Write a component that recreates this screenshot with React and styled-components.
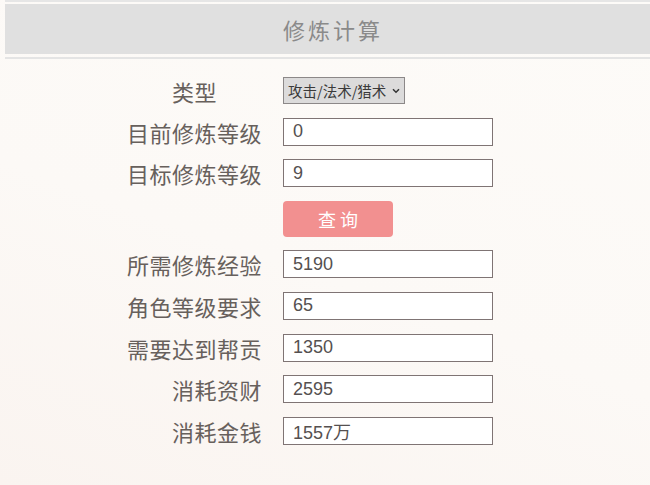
import React from "react";
import styled, { createGlobalStyle } from "styled-components";

const Global = createGlobalStyle`
  html, body { margin: 0; padding: 0; }
  body {
    width: 650px;
    height: 485px;
    overflow: hidden;
    background: linear-gradient(200deg, #fdfbf8 0%, #fcf9f6 55%, #faf4f0 100%);
    font-family: "Noto Sans CJK SC", "Liberation Sans", sans-serif;
  }
`;

const HeaderWrap = styled.header`
  margin-left: 5px;
  border-top: 2px solid #e6e6e6;
  border-bottom: 2px solid #e4e4e4;
  padding: 2px 0 3px;
`;

const HeaderBar = styled.div`
  height: 50px;
  background: #e0e0e0;
  display: flex;
  align-items: center;
  justify-content: center;
`;

const Title = styled.h1`
  margin: 0;
  padding-left: 11px;
  font-size: 22px;
  font-weight: 400;
  letter-spacing: 3px;
  color: #8a8a8a;
  line-height: 1;
`;

const Form = styled.div`
  display: grid;
  grid-template-columns: 135px 210px;
  column-gap: 21px;
  row-gap: 13.6px;
  align-items: center;
  padding: 18px 0 0 127px;
`;

const Label = styled.label`
  font-size: 22px;
  letter-spacing: 0.5px;
  color: #67605c;
  line-height: 1;
  white-space: nowrap;
  text-align: ${(p) => p.$align || "right"};
`;

const SelectWrap = styled.div`
  position: relative;
  width: 122px;
  height: 27px;
`;

const Select = styled.select`
  appearance: none;
  -webkit-appearance: none;
  width: 100%;
  height: 100%;
  box-sizing: border-box;
  margin: 0;
  padding: 0 0 0 4px;
  border: 1px solid #8c8888;
  border-radius: 0;
  background: #dcdbdb;
  color: #3a3a3a;
  font-family: "Noto Sans CJK SC", "Liberation Sans", sans-serif;
  font-size: 14.5px;
  outline: none;
`;

const Chevron = styled.svg`
  position: absolute;
  right: 5px;
  top: 11px;
  width: 8px;
  height: 6px;
  pointer-events: none;
`;

const Input = styled.input`
  width: 210px;
  height: 28px;
  box-sizing: border-box;
  margin: 0;
  padding: 0 0 0 9px;
  border: 1px solid #7f7474;
  border-radius: 0;
  background: #ffffff;
  color: #555050;
  font-family: "Liberation Sans", "Noto Sans CJK SC", sans-serif;
  font-size: 18px;
  outline: none;
`;

const Button = styled.button`
  width: 110px;
  height: 36px;
  border: none;
  border-radius: 4px;
  background: #f29090;
  color: #ffffff;
  font-family: "Noto Sans CJK SC", sans-serif;
  font-size: 18px;
  letter-spacing: 4px;
  padding: 0 0 0 4px;
  cursor: pointer;
`;

const inputs = [
  ["目前修炼等级", "0"],
  ["目标修炼等级", "9"],
];

const results = [
  ["所需修炼经验", "5190"],
  ["角色等级要求", "65"],
  ["需要达到帮贡", "1350"],
  ["消耗资财", "2595"],
  ["消耗金钱", "1557万"],
];

export default function App() {
  return (
    <>
      <Global />
      <HeaderWrap>
        <HeaderBar>
          <Title>修炼计算</Title>
        </HeaderBar>
      </HeaderWrap>
      <Form>
        <Label $align="center">类型</Label>
        <SelectWrap>
          <Select defaultValue="gongji">
            <option value="gongji">攻击/法术/猎术</option>
            <option value="fangyu">防御/抗法</option>
          </Select>
          <Chevron viewBox="0 0 8 6">
            <path d="M1 1.2 L4 4.2 L7 1.2" fill="none" stroke="#333" strokeWidth="1.5" />
          </Chevron>
        </SelectWrap>
        {inputs.map(([l, v]) => (
          <React.Fragment key={l}>
            <Label>{l}</Label>
            <Input defaultValue={v} />
          </React.Fragment>
        ))}
        <span />
        <Button>查询</Button>
        {results.map(([l, v]) => (
          <React.Fragment key={l}>
            <Label>{l}</Label>
            <Input defaultValue={v} readOnly />
          </React.Fragment>
        ))}
      </Form>
    </>
  );
}
